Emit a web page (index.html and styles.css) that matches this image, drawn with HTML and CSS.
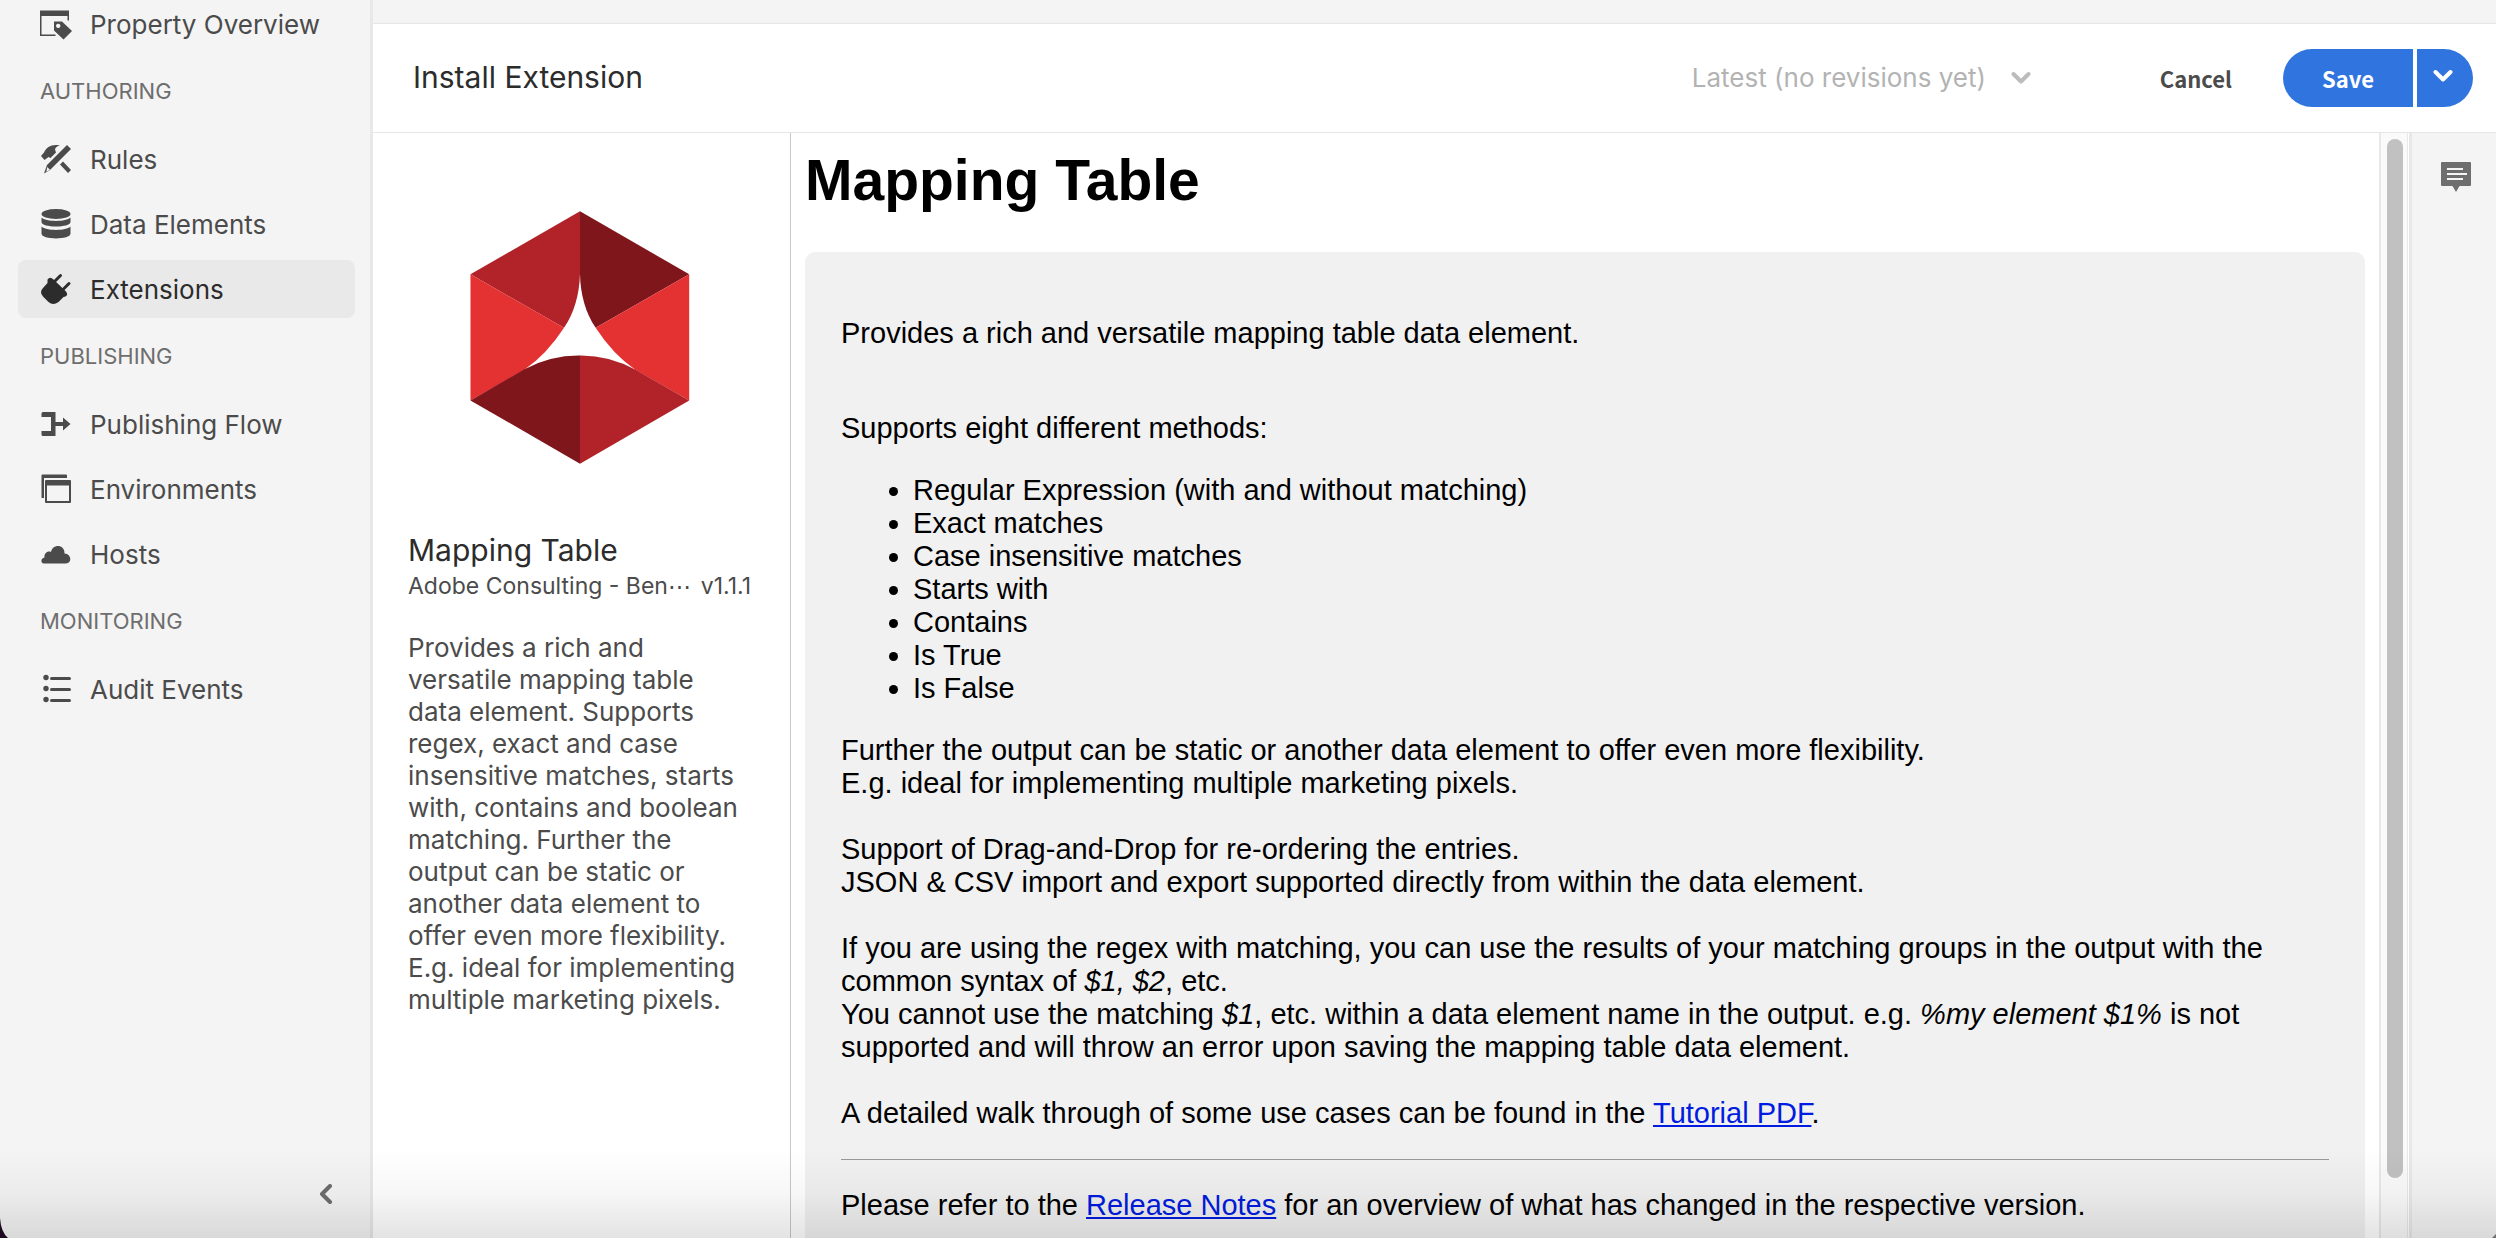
FILE: index.html
```html
<!DOCTYPE html>
<html lang="en">
<head>
    <meta charset="UTF-8">
    <title>Install Extension</title>
    <link rel="stylesheet" href="styles.css">
</head>
<body>

<div class="app">
    <nav class="sidebar">
        <ul class="nav-list">
            <li><a class="nav-item" href="#">
                <svg class="icon" viewBox="0 0 32 32"><path d="M0 2.500h29v10h-1.500V8H1.500v18.500h14V28H0z"/><path fill-rule="evenodd" d="M14 13.500h8l10 9.500-8.500 8.500L14 22.500zM18.200 15.700a2.200 2.200 0 1 0 .01 0z"/></svg>
                Property Overview</a></li>
        </ul>
        <h2 class="nav-heading">AUTHORING</h2>
        <ul class="nav-list">
            <li><a class="nav-item" href="#">
                <svg class="icon" viewBox="0 0 32 32"><path d="M27 2l4 4L10 27l-6 3.500L7 22z"/><path class="cut" d="M7.200 24l2.800 2.800-3.600 2z"/><path d="M1 13l3-3.500C7 4 11 1 20 2.500c-3 .5-4.500 2-5 4l1 3-5.500 5.500-2-1-4 3zM23 18.500l8 8.500-3 3-8-8.500z"/></svg>
                Rules</a></li>
            <li><a class="nav-item" href="#">
                <svg class="icon" viewBox="0 0 32 32"><ellipse cx="16" cy="6" rx="14.500" ry="5"/><path d="M1.500 9.500c4 4.500 25 4.500 29 0V14c0 6-29 6-29 0zM1.500 18.500c4 4.500 25 4.500 29 0v7c0 6.500-29 6.500-29 0z"/></svg>
                Data Elements</a></li>
            <li><a class="nav-item selected" href="#">
                <svg class="icon" viewBox="0 0 32 32"><path d="M7.500 6.500q2.500-3.500 6 0L26 18.500q2.500 3.500-.5 5l-2 .5-5 5q-5.500 4-10 0l-5.500-5.500q-4-4.500 0-8.500l4.500-5z"/><path class="line" d="M14.500 8.500l6-6M23.500 16l5.500-5.500"/></svg>
                Extensions</a></li>
        </ul>
        <h2 class="nav-heading">PUBLISHING</h2>
        <ul class="nav-list">
            <li><a class="nav-item" href="#">
                <svg class="icon" viewBox="0 0 32 32"><path d="M3 4h12.500v10H23V9.500L30.500 16 23 22.500V18h-7.500v10H3q-1.500 0-1.500-1.500V23H11V9H1.500V5.500Q1.500 4 3 4z"/></svg>
                Publishing Flow</a></li>
            <li><a class="nav-item" href="#">
                <svg class="icon" viewBox="0 0 32 32"><path d="M1.500 2.500q0-1 1-1H26q1 0 1 1V5H4v20H1.500z"/><path fill-rule="evenodd" d="M6 7h24q1 0 1 1v21q0 1-1 1H6q-1 0-1-1V8q0-1 1-1zM7 12.500V28h22V12.500z"/></svg>
                Environments</a></li>
            <li><a class="nav-item" href="#">
                <svg class="icon" viewBox="0 0 32 32"><path d="M4 25.500c-3.500 0-3.500-5.500.5-6-.5-4 3-7 6.500-5.500 1.500-8.500 14-8 13.500 1.500 7.500.500 7.500 10 1.500 10z"/></svg>
                Hosts</a></li>
        </ul>
        <h2 class="nav-heading">MONITORING</h2>
        <ul class="nav-list">
            <li><a class="nav-item" href="#">
                <svg class="icon" viewBox="0 0 32 32"><circle cx="6" cy="4.500" r="2.700"/><circle cx="6" cy="15.500" r="2.700"/><circle cx="6" cy="26.500" r="2.700"/><path d="M11.500 4h18q1.500 0 1.500 1.500T29.500 7h-18Q10 7 10 5.500T11.500 4zM11.500 15h18q1.500 0 1.500 1.500T29.500 18h-18q-1.500 0-1.500-1.500t1.500-1.500zM11.500 26h18q1.500 0 1.500 1.500T29.500 29h-18q-1.500 0-1.500-1.500t1.500-1.500z"/></svg>
                Audit Events</a></li>
        </ul>
        <button class="collapse" aria-label="Collapse menu">
            <svg class="chevron" viewBox="0 0 20 20"><path d="M13 2L5 10l8 8"/></svg>
        </button>
    </nav>

    <div class="main">
        <div class="topbar"></div>
        <header class="header">
            <h1 class="title">Install Extension</h1>
            <div class="revision">
                <select class="revision-select" aria-label="Revision" disabled>
                    <option>Latest (no revisions yet)</option>
                </select>
                <svg class="chevron" viewBox="0 0 20 20"><path d="M2.500 7l7.500 7.500L17.500 7"/></svg>
            </div>
            <button class="cancel">Cancel</button>
            <div class="save-group">
                <button class="save">Save</button>
                <button class="save-more" aria-label="More save options">
                    <svg class="chevron" viewBox="0 0 20 20"><path d="M2.500 4l7.500 7.500L17.500 4"/></svg>
                </button>
            </div>
        </header>

        <div class="body">
            <aside class="extension">
                <svg class="logo" viewBox="0 0 660 760">
                    <path fill="#b12329" d="M330 1v188q-3 95-48 162L1 190z"/>
                    <path fill="#7f161b" d="M330 1l328 189-281 161q-45-67-47-162z"/>
                    <path fill="#e43233" d="M1 190l281 161q-52 80-119 126L1 569zM658 190L377 351q52 80 119 126l162 92z"/>
                    <path fill="#7f161b" d="M1 569l162-94q80-42 167-41v325z"/>
                    <path fill="#b12329" d="M330 434q87-1 167 43l161 92-328 190z"/>
                </svg>
                <h2 class="ext-name">Mapping Table</h2>
                <div class="ext-meta"><span>Adobe Consulting - Ben⋯</span><span>v1.1.1</span></div>
                <p class="ext-desc">Provides a rich and versatile mapping table data element. Supports regex, exact and case insensitive matches, starts with, contains and boolean matching. Further the output can be static or another data element to offer even more flexibility. E.g. ideal for implementing multiple marketing pixels.</p>
            </aside>

            <main class="content">
                <h1>Mapping Table</h1>
                <div class="panel">
                    <p>Provides a rich and versatile mapping table data element.</p>
                    <br>
                    <p>Supports eight different methods:</p>
                    <ul>
                        <li>Regular Expression (with and without matching)</li>
                        <li>Exact matches</li>
                        <li>Case insensitive matches</li>
                        <li>Starts with</li>
                        <li>Contains</li>
                        <li>Is True</li>
                        <li>Is False</li>
                    </ul>
                    <p>
                        Further the output can be static or another data element to offer even more flexibility.<br>
                        E.g. ideal for implementing multiple marketing pixels.<br><br>
                        Support of Drag-and-Drop for re-ordering the entries.<br>
                        JSON &amp; CSV import and export supported directly from within the data element.<br><br>
                        If you are using the regex with matching, you can use the results of your matching groups in the output with the common syntax of <i>$1, $2</i>, etc.<br>
                        You cannot use the matching <i>$1</i>, etc. within a data element name in the output. e.g. <i>%my element $1%</i> is not supported and will throw an error upon saving the mapping table data element.<br><br>
                        A detailed walk through of some use cases can be found in the <a href="#">Tutorial PDF</a>.
                    </p>
                    <hr>
                    <p>Please refer to the <a href="#">Release Notes</a> for an overview of what has changed in the respective version.</p>
                </div>
            </main>

            <div class="scroll-track"><div class="scroll-thumb"></div></div>

            <div class="rail">
                <button class="notes" aria-label="Notes">
                    <svg class="icon" viewBox="0 0 32 32"><path fill-rule="evenodd" d="M2 1h28q1 0 1 1v22q0 1-1 1H19.500L16 31l-3.500-6H2q-1 0-1-1V2q0-1 1-1zM7 7v2h16V7zM7 12v2h20v-2zM7 17v2h16v-2z"/></svg>
                </button>
            </div>
        </div>
    </div>
</div>

<div class="bottom-shade"></div>
<svg class="corner corner-left" viewBox="0 0 8 20"><path d="M0 0Q1 14 8 20H0z"/></svg>
<svg class="corner corner-right" viewBox="0 0 8 20"><path d="M8 16v4H4z"/></svg>

</body>
</html>
```
FILE: styles.css
```css
* {
    box-sizing: border-box;
}
body {
    margin: 0;
    font-family: Inter, "Noto Sans", sans-serif;
    font-size: 26px;
    color: #4b4b4b;
    background: #fff;
    overflow: hidden;
}
h1, h2, p, ul {
    margin: 0;
}
button {
    border: none;
    padding: 0;
    background: none;
    font-family: "Noto Sans CJK JP", sans-serif;
    font-size: 22px;
    font-weight: bold;
    color: #4b4b4b;
    cursor: pointer;
}
svg {
    display: block;
    flex: none;
}
.app {
    display: flex;
    height: 100vh;
}
.icon {
    width: 32px;
    height: 32px;
    fill: currentColor;
}
.icon .cut {
    fill: #f4f4f4;
}
.icon .line {
    fill: none;
    stroke: currentColor;
    stroke-width: 3;
    stroke-linecap: round;
}
.chevron {
    width: 20px;
    height: 20px;
    fill: none;
    stroke: currentColor;
    stroke-width: 4;
    stroke-linecap: round;
    stroke-linejoin: round;
}

/* left navigation */
.sidebar {
    display: flex;
    flex-direction: column;
    flex: none;
    width: 373px;
    padding: 0 15px 34px 18px;
    background: #f4f4f4;
    border-right: 3px solid #e8e8e8;
}
.nav-list {
    display: flex;
    flex-direction: column;
    gap: 7px;
    padding: 0;
    list-style: none;
}
.nav-list:first-child {
    margin-top: -5px;
}
.nav-item {
    display: flex;
    align-items: center;
    gap: 18px;
    height: 58px;
    padding-left: 22px;
    border-radius: 8px;
    color: #4b4b4b;
    text-decoration: none;
}
.nav-item.selected {
    background: #e9e9e9;
    color: #2c2c2c;
}
.nav-heading {
    padding-left: 22px;
    font-size: 22px;
    font-weight: normal;
    line-height: 77px;
    color: #6e6e6e;
}
.collapse {
    margin: auto 18px 0 auto;
    color: #6e6e6e;
}

/* header */
.main {
    display: flex;
    flex-direction: column;
    flex: 1;
    min-width: 0;
}
.topbar {
    flex: none;
    height: 24px;
    background: #f4f4f4;
    border-bottom: 1px solid #e6e6e6;
}
.header {
    display: flex;
    align-items: center;
    flex: none;
    height: 109px;
    padding: 0 23px 0 40px;
    border-bottom: 1px solid #e6e6e6;
}
.title,
.revision {
    padding-bottom: 2px;
}
.title {
    flex: 1;
    font-size: 30px;
    font-weight: normal;
    color: #2c2c2c;
}
.revision {
    display: flex;
    align-items: center;
    gap: 24px;
    color: #bcbcbc;
}
.revision-select {
    appearance: none;
    border: none;
    padding: 0;
    background: none;
    font: inherit;
    color: #b3b3b3;
    opacity: 1;
}
.cancel {
    margin: 0 51px 0 129px;
}
.save-group {
    display: flex;
    gap: 4px;
}
.save-group button {
    height: 58px;
    background: #3074df;
    color: #fff;
}
.save-group .save {
    width: 130px;
    border-radius: 29px 0 0 29px;
}
.save-group .save-more {
    display: flex;
    align-items: center;
    justify-content: center;
    width: 56px;
    padding-right: 4px;
    border-radius: 0 29px 29px 0;
}

/* extension summary */
.body {
    display: flex;
    flex: 1;
    min-height: 0;
}
.extension {
    flex: none;
    width: 418px;
    padding: 78px 39px 0 35px;
    border-right: 1px solid #c8c8c8;
}
.logo {
    width: 220px;
    height: 253px;
    margin: 0 auto;
}
.ext-name {
    margin-top: 68px;
    font-size: 30px;
    font-weight: normal;
    line-height: 36px;
    color: #2c2c2c;
}
.ext-meta {
    display: flex;
    justify-content: space-between;
    font-size: 23px;
    line-height: 36px;
    white-space: nowrap;
}
.ext-desc {
    margin-top: 28px;
    line-height: 32px;
}

/* extension view */
.content {
    flex: 1;
    min-width: 0;
    padding: 14px 14px 0;
    overflow: hidden;
    font-family: "Liberation Sans", Arial, sans-serif;
    font-size: 29px;
    line-height: 33px;
    color: #000;
}
.content h1 {
    margin-bottom: 39px;
    font-size: 57px;
    line-height: 66px;
}
.panel {
    padding: 65px 36px;
    background: #f1f1f1;
    border-radius: 10px;
}
.panel br + p {
    margin-top: 29px;
}
.panel ul {
    margin: 29px 0;
    padding-left: 72px;
}
.panel hr {
    margin: 29px 0;
    border: none;
    border-top: 1px solid #9a9a9a;
}
.panel a {
    color: #001ce0;
}
.scroll-track {
    flex: none;
    width: 29px;
    padding: 6px 4px 0 6px;
    background: #fafafa;
    border-left: 2px solid #e8e8e8;
    border-right: 1px solid #e8e8e8;
}
.scroll-thumb {
    width: 16px;
    height: 94.5%;
    border-radius: 8px;
    background: #c1c1c1;
}
.rail {
    flex: none;
    width: 87px;
    margin-left: 1px;
    padding: 28px 0 0 28px;
    background: #f4f4f4;
    border-left: 3px solid #e8e8e8;
}
.notes {
    color: #6e6e6e;
}

/* window edge */
.bottom-shade {
    position: fixed;
    left: 0;
    right: 0;
    bottom: 0;
    height: 90px;
    background: linear-gradient(rgba(0, 0, 0, 0), rgba(0, 0, 0, 0.03) 50%, rgba(0, 0, 0, 0.11));
    pointer-events: none;
}
.corner {
    position: fixed;
    bottom: 0;
    width: 8px;
    height: 20px;
}
.corner-left {
    left: 0;
    fill: #1c0a1e;
}
.corner-right {
    right: 0;
    fill: #6e6e6e;
}
```
